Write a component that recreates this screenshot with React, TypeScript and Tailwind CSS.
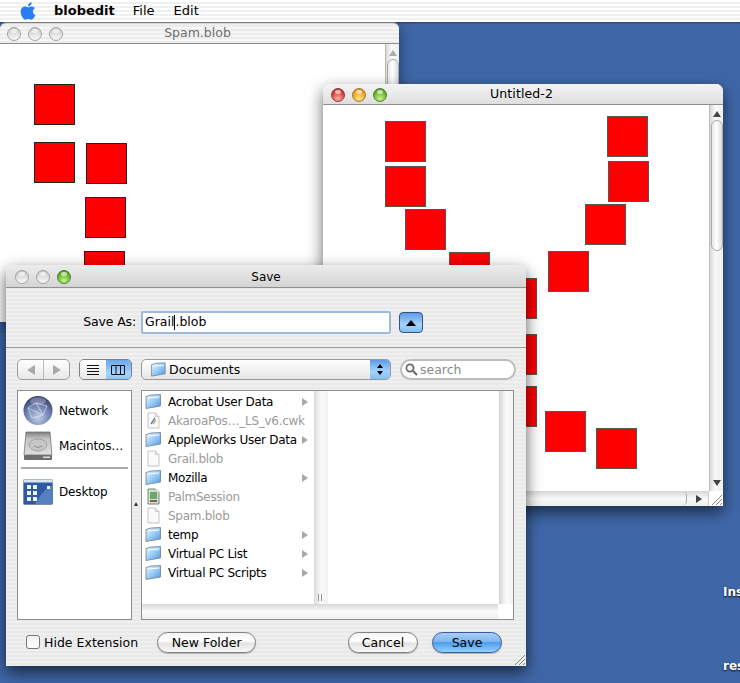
import React from "react";
import { FaApple } from "react-icons/fa";

const FONT = "font-['DejaVu_Sans',sans-serif]";
const STRIPES = "bg-[repeating-linear-gradient(180deg,#efefef_0px,#efefef_2px,#e9e9e9_2px,#e9e9e9_4px)]";

function Light({ color }: { color?: "red" | "yellow" | "green" }) {
  const fills = {
    red: "bg-[radial-gradient(circle_at_50%_80%,#ffb0aa_0%,#d9413c_60%,#9c2522_100%)] border-[#8e3a38]",
    yellow: "bg-[radial-gradient(circle_at_50%_80%,#ffe98f_0%,#f0a020_60%,#b87a18_100%)] border-[#a07a30]",
    green: "bg-[radial-gradient(circle_at_50%_80%,#c6f58e_0%,#69b32c_60%,#3f7a15_100%)] border-[#4f7f2f]",
  };
  const cls = color ? fills[color] : "bg-[linear-gradient(180deg,#c6c6c6_0%,#e6e6e6_60%,#f8f8f8_100%)] border-[#a2a2a2]";
  return (
    <span className={`relative block w-[14px] h-[14px] rounded-full border ${cls}`}>
      <span className="absolute left-[3px] top-[1px] w-[6px] h-[4px] rounded-full bg-white/60" />
    </span>
  );
}

function Lights({ colored, green, pos }: { colored?: boolean; green?: boolean; pos: string }) {
  return (
    <div className={`absolute ${pos} flex gap-[7px]`}>
      <Light color={colored ? "red" : undefined} />
      <Light color={colored ? "yellow" : undefined} />
      <Light color={colored || green ? "green" : undefined} />
    </div>
  );
}

function Sq({ x, y, grey }: { x: number; y: number; grey?: boolean }) {
  return (
    <div
      className={`absolute w-[41px] h-[41px] bg-[#ff0000] border ${grey ? "border-[#555]" : "border-[#222]"}`}
      style={{ left: x, top: y }}
    />
  );
}

function Folder() {
  return (
    <svg width="17" height="17" viewBox="0 0 17 17" className="shrink-0">
      <defs>
        <linearGradient id="fg" x1="0" y1="0" x2="1" y2="1">
          <stop offset="0" stopColor="#eef7ff" />
          <stop offset="0.5" stopColor="#9accf6" />
          <stop offset="1" stopColor="#4f96e0" />
        </linearGradient>
      </defs>
      <path d="M1 3.5 L6 2 L15.5 1.5 L15.5 13 L1 15.5 Z" fill="url(#fg)" stroke="#6d7f93" strokeWidth="0.8" />
      <path d="M3 5 L14 4" stroke="#ffffff" strokeWidth="1" />
    </svg>
  );
}

function Doc({ kind }: { kind?: "cwk" | "palm" }) {
  return (
    <svg width="17" height="17" viewBox="0 0 17 17" className="shrink-0">
      <path
        d="M3 1 H10.5 L14 4.5 V16 H3 Z"
        fill={kind === "palm" ? "#cfe2cf" : "#fafafa"}
        stroke={kind === "palm" ? "#6a8a6a" : "#c4c4c4"}
        strokeWidth="1"
      />
      <path d="M10.5 1 V4.5 H14" fill="#e4e4e4" stroke="#c4c4c4" strokeWidth="0.8" />
      {kind === "cwk" && (
        <>
          <path d="M6 12 L10 6" stroke="#4f7fd0" strokeWidth="1.4" />
          <path d="M8 12 L11 8" stroke="#e0b030" strokeWidth="1.4" />
        </>
      )}
      {kind === "palm" && (
        <>
          <rect x="5" y="4" width="7" height="7" fill="#6fa56f" />
          <rect x="5" y="12" width="7" height="2" fill="#8a5a5a" />
        </>
      )}
    </svg>
  );
}

function Row({ name, folder, kind }: { name: string; folder?: boolean; kind?: "cwk" | "palm" }) {
  return (
    <div className="h-[19px] flex items-center pl-[3px] pr-[3px] relative">
      {folder ? <Folder /> : <Doc kind={kind} />}
      <span className={`ml-[6px] whitespace-nowrap text-[12px] tracking-[-0.28px] ${folder ? "text-black" : "text-[#9a9a9a]"}`}>
        {name}
      </span>
      {folder && (
        <span className="absolute right-[6px] top-[6px] w-0 h-0 border-y-[4px] border-y-transparent border-l-[6px] border-l-[#a8a8a8]" />
      )}
    </div>
  );
}

function Globe() {
  return (
    <svg width="30" height="31" viewBox="0 0 30 31" className="shrink-0">
      <defs>
        <radialGradient id="gl" cx="0.5" cy="0.75" r="0.75">
          <stop offset="0" stopColor="#c0cbe4" />
          <stop offset="0.55" stopColor="#7283b4" />
          <stop offset="1" stopColor="#2c3560" />
        </radialGradient>
      </defs>
      <circle cx="15" cy="15.5" r="14.5" fill="url(#gl)" />
      <ellipse cx="15" cy="6" rx="8" ry="4" fill="#ffffff" opacity="0.25" />
      <path d="M5 13 L13 8 L24 11 L20 20 L9 23 Z M13 8 L20 20 M5 13 L20 20" fill="none" stroke="#e6ebf7" strokeWidth="0.6" />
    </svg>
  );
}

function Disk() {
  return (
    <svg width="30" height="30" viewBox="0 0 30 30" className="shrink-0">
      <defs>
        <linearGradient id="hd" x1="0" y1="0" x2="0" y2="1">
          <stop offset="0" stopColor="#7e7e7e" />
          <stop offset="0.3" stopColor="#c4c4c4" />
          <stop offset="1" stopColor="#e0e0e0" />
        </linearGradient>
      </defs>
      <path d="M3 1 H27 L29 24 H1 Z" fill="url(#hd)" stroke="#666" strokeWidth="0.7" />
      <ellipse cx="15" cy="14" rx="9" ry="6" fill="#c6c6c6" stroke="#8a8a8a" strokeWidth="0.6" />
      <path d="M11 15 Q15 18 19 15" fill="none" stroke="#808080" strokeWidth="0.8" />
      <rect x="1" y="24" width="28" height="5" rx="1" fill="#6e6e6e" />
      <rect x="20" y="25.5" width="7" height="1.5" fill="#ddd" />
    </svg>
  );
}

function DesktopIcon() {
  return (
    <svg width="30" height="26" viewBox="0 0 30 26" className="shrink-0">
      <rect x="0.5" y="0.5" width="29" height="25" rx="1" fill="#2a5aa8" stroke="#7d8da5" />
      <rect x="0.5" y="0.5" width="29" height="3" fill="#dbe4ef" />
      <path d="M12 25 Q22 8 30 6 V25 Z" fill="#5580c0" />
      {[6, 12, 18].map((y) => (
        <React.Fragment key={y}>
          <rect x="4" y={y} width="4" height="4" fill="#f0f4fa" />
          <rect x="10" y={y} width="4" height="4" fill="#f0f4fa" />
        </React.Fragment>
      ))}
      <rect x="24" y="7" width="3" height="3" fill="#f0f4fa" />
    </svg>
  );
}

function Grip({ cls }: { cls: string }) {
  return (
    <svg width="14" height="14" viewBox="0 0 14 14" className={`absolute right-0 bottom-0 ${cls}`}>
      <path d="M13 3 L3 13 M13 7 L7 13 M13 11 L11 13" stroke="#8a8a8a" strokeWidth="1" />
    </svg>
  );
}

function VScroll({ thumbH, blue, bottomArrow }: { thumbH: number; blue?: boolean; bottomArrow?: boolean }) {
  return (
    <div className="w-[14px] h-full bg-[linear-gradient(90deg,#d8d8d8,#f8f8f8_40%,#f0f0f0)] border-l border-[#bbb] flex flex-col items-center">
      <span className={`mt-[6px] w-0 h-0 border-x-[4px] border-x-transparent border-b-[6px] ${blue ? "border-b-[#444]" : "border-b-[#aaa]"}`} />
      <div
        className="mt-[3px] w-[12px] rounded-full border border-[#aaa] bg-[linear-gradient(90deg,#e8e8e8,#ffffff_45%,#dcdcdc)]"
        style={{ height: thumbH }}
      />
      {bottomArrow && (
        <span className="mt-auto mb-[5px] w-0 h-0 border-x-[4px] border-x-transparent border-t-[6px] border-t-[#444]" />
      )}
    </div>
  );
}

function Pill({ children, w, primary }: { children: React.ReactNode; w: string; primary?: boolean }) {
  return (
    <div
      className={`${w} h-[21px] pt-[1px] rounded-full border flex items-center justify-center text-[12.5px] text-black shadow-[0_1px_1px_rgba(0,0,0,0.25)] ${
        primary
          ? "border-[#3c5aa0] bg-[linear-gradient(180deg,#a8cef5_0%,#7db6f0_45%,#4f9cec_50%,#8fd4fc_100%)]"
          : "border-[#808080] bg-[linear-gradient(180deg,#f4f4f4_0%,#ffffff_40%,#e4e4e4_55%,#f8f8f8_100%)]"
      }`}
    >
      {children}
    </div>
  );
}

const files: { name: string; folder?: boolean; kind?: "cwk" | "palm" }[] = [
  { name: "Acrobat User Data", folder: true },
  { name: "AkaroaPos…_LS_v6.cwk", kind: "cwk" },
  { name: "AppleWorks User Data", folder: true },
  { name: "Grail.blob" },
  { name: "Mozilla", folder: true },
  { name: "PalmSession", kind: "palm" },
  { name: "Spam.blob" },
  { name: "temp", folder: true },
  { name: "Virtual PC List", folder: true },
  { name: "Virtual PC Scripts", folder: true },
];

export default function App() {
  return (
    <div className={`relative w-[740px] h-[683px] overflow-hidden bg-[#3f67a8] ${FONT}`}>
      {/* desktop labels */}
      <span className="absolute left-[723px] top-[583px] text-[12px] font-bold text-white [text-shadow:0_1px_2px_#000]">Ins</span>
      <span className="absolute left-[723px] top-[657px] text-[12px] font-bold text-white [text-shadow:0_1px_2px_#000]">res</span>

      {/* Spam window */}
      <div className="absolute left-0 top-[22px] w-[399px] h-[300px] rounded-t-[7px] bg-white flex flex-col shadow-[0_4px_14px_rgba(0,0,0,0.45)]">
        <div className="relative h-[22px] shrink-0 pr-[4px] rounded-t-[7px] border-t border-[#aaa] border-b border-b-[#8e8e8e] bg-[repeating-linear-gradient(180deg,#f6f6f6_0px,#f6f6f6_2px,#ececec_2px,#ececec_4px)] flex items-center justify-center text-[12.5px] text-[#6e6e6e]">
          <Lights pos="left-[7px] top-[4px]" />
          Spam.blob
        </div>
        <div className="relative flex-1 flex justify-end">
          <Sq x={34} y={40} />
          <Sq x={34} y={98} />
          <Sq x={86} y={99} />
          <Sq x={85} y={153} />
          <Sq x={84} y={207} />
          <VScroll thumbH={60} />
        </div>
      </div>

      {/* Untitled-2 window */}
      <div className="absolute left-[323px] top-[84px] w-[400px] h-[422px] rounded-t-[7px] bg-white flex flex-col shadow-[0_6px_16px_rgba(0,0,0,0.6)]">
        <div className="relative h-[21px] shrink-0 pr-[3px] rounded-t-[7px] border-b border-[#8e8e8e] bg-[linear-gradient(180deg,#f4f4f4,#dedede)] flex items-center justify-center text-[12.5px] tracking-[0.1px] text-black">
          <Lights colored pos="left-[8px] top-[4px]" />
          Untitled-2
        </div>
        <div className="relative flex-1 flex justify-end min-h-0">
          <Sq x={62} y={16} grey />
          <Sq x={62} y={61} grey />
          <Sq x={82} y={104} grey />
          <Sq x={126} y={147} grey />
          <Sq x={173} y={173} grey />
          <Sq x={173} y={229} grey />
          <Sq x={173} y={281} grey />
          <Sq x={222} y={306} grey />
          <Sq x={273} y={323} grey />
          <Sq x={284} y={11} grey />
          <Sq x={285} y={56} grey />
          <Sq x={262} y={99} grey />
          <Sq x={225} y={146} grey />
          <VScroll thumbH={131} blue bottomArrow />
        </div>
        <div className="relative h-[15px] shrink-0 flex bg-[linear-gradient(180deg,#d8d8d8,#f8f8f8_50%,#eeeeee)]">
          <div className="flex-1 flex justify-end items-center pr-[3px]">
            <span className="w-[4px] h-[13px] rounded-r-full border-r border-[#aaa]" />
          </div>
          <div className="w-[18px] flex items-center justify-center">
            <span className="w-0 h-0 border-y-[4px] border-y-transparent border-l-[6px] border-l-[#444]" />
          </div>
          <div className="w-[15px] bg-white border-l border-[#ccc]" />
          <Grip cls="" />
        </div>
      </div>

      {/* Save dialog */}
      <div className={`absolute left-[6px] top-[265px] w-[520px] h-[401px] rounded-t-[7px] flex flex-col ${STRIPES} shadow-[0_6px_16px_rgba(0,0,0,0.65)]`}>
        <div className="relative h-[23px] shrink-0 pt-[2px] rounded-t-[7px] border-b border-[#8e8e8e] bg-[linear-gradient(180deg,#ececec,#d4d4d4)] flex items-center justify-center text-[12px] text-black">
          <Lights green pos="left-[9px] top-[5px]" />
          Save
        </div>

        {/* Save As */}
        <div className="h-[60px] shrink-0 border-b border-[#9a9a9a] flex items-center pt-[10px]">
          <span className="w-[130px] text-right text-[12.5px] tracking-[-0.15px] text-black">Save As:</span>
          <div className="ml-[5px] w-[250px] h-[23px] bg-white border-2 border-[#9cbbdc] rounded-[2px] flex items-center pl-[2px] text-[12.5px] text-black">
            Grail<span className="inline-block w-px h-[15px] bg-black" />.blob
          </div>
          <div className="ml-[8px] w-[24px] h-[21px] rounded-[4px] border border-[#3a4f80] bg-[linear-gradient(180deg,#5b9ce8,#a6d2f9_60%,#7fc0f8)] flex items-center justify-center">
            <span className="w-0 h-0 border-x-[5px] border-x-transparent border-b-[6px] border-b-black" />
          </div>
        </div>

        {/* toolbar */}
        <div className="h-[42px] shrink-0 flex items-start pt-[11px] pl-[11px]">
          <div className="w-[53px] h-[21px] rounded-[5px] border border-[#a0a0a0] bg-[linear-gradient(180deg,#fff,#e8e8e8)] flex">
            <div className="flex-1 border-r border-[#bbb] flex items-center justify-center">
              <span className="w-0 h-0 border-y-[5px] border-y-transparent border-r-[8px] border-r-[#aaa]" />
            </div>
            <div className="flex-1 flex items-center justify-center">
              <span className="w-0 h-0 border-y-[5px] border-y-transparent border-l-[8px] border-l-[#aaa]" />
            </div>
          </div>
          <div className="ml-[9px] w-[53px] h-[21px] rounded-[5px] border border-[#808080] flex overflow-hidden">
            <div className="flex-1 bg-[linear-gradient(180deg,#fff,#e8e8e8)] flex items-center justify-center">
              <svg width="12" height="10" viewBox="0 0 12 10"><path d="M0 .5H12M0 3.5H12M0 6.5H12M0 9.5H12" stroke="#111" /></svg>
            </div>
            <div className="flex-1 bg-[linear-gradient(180deg,#6aa8ea,#a8d4fa_70%,#8ac8fa)] flex items-center justify-center">
              <svg width="14" height="10" viewBox="0 0 14 10"><path d="M.5.5H13.5V9.5H.5ZM5 .5V9.5M9.5.5V9.5" fill="none" stroke="#111" /></svg>
            </div>
          </div>
          <div className="ml-[9px] w-[250px] h-[21px] rounded-[5px] border border-[#9a9a9a] bg-[linear-gradient(180deg,#fff,#e6e6e6)] flex items-center overflow-hidden">
            <span className="ml-[8px] scale-[0.95]"><Folder /></span>
            <span className="ml-[2px] pt-[1px] flex-1 text-[12.5px] text-black">Documents</span>
            <div className="w-[20px] h-full bg-[linear-gradient(180deg,#5b9ce8,#a6d2f9_60%,#7fc0f8)] flex flex-col items-center justify-center gap-[3px]">
              <span className="w-0 h-0 border-x-[3px] border-x-transparent border-b-[4px] border-b-black" />
              <span className="w-0 h-0 border-x-[3px] border-x-transparent border-t-[4px] border-t-black" />
            </div>
          </div>
          <div className="ml-[9px] w-[116px] h-[21px] rounded-full border-2 border-[#bdbdbd] bg-white flex items-center pl-[3px] text-[12.5px] text-[#8a8a8a]">
            <svg width="13" height="13" viewBox="0 0 13 13"><circle cx="5" cy="5" r="3.6" fill="none" stroke="#666" strokeWidth="1.7" /><path d="M8 8L12 12" stroke="#666" strokeWidth="2" /></svg>
            <span className="ml-[2px] pt-[1px]">search</span>
          </div>
        </div>

        {/* browser */}
        <div className="h-[230px] shrink-0 flex pl-[11px]">
          <div className="w-[115px] h-full bg-white border border-[#8e8e8e] flex flex-col pt-[2px]">
            <div className="h-[35px] flex items-center gap-[6px] pl-[5px]">
              <Globe />
              <span className="text-[12px] tracking-[-0.15px] text-black whitespace-nowrap">Network</span>
            </div>
            <div className="h-[35px] flex items-center gap-[6px] pl-[5px]">
              <Disk />
              <span className="text-[12px] tracking-[-0.15px] text-black whitespace-nowrap">Macintos…</span>
            </div>
            <div className="mx-[3px] mt-[4px] h-[2px] bg-[#aaa]" />
            <div className="mt-[6px] h-[34px] flex items-center gap-[6px] pl-[5px]">
              <DesktopIcon />
              <span className="text-[12px] tracking-[-0.15px] text-black whitespace-nowrap">Desktop</span>
            </div>
          </div>
          <div className="relative w-[9px] h-full">
            <span className="absolute left-[2px] top-[112px] w-0 h-0 border-x-[2.5px] border-x-transparent border-b-[4px] border-b-[#333]" />
          </div>
          <div className="w-[373px] h-full bg-white border border-[#8e8e8e] flex flex-col">
            <div className="flex-1 min-h-0 flex">
              <div className="w-[172px] h-full pt-[1px]">
                {files.map((f) => (
                  <Row key={f.name} {...f} />
                ))}
              </div>
              <div className="relative w-[14px] h-full bg-[linear-gradient(90deg,#dcdcdc,#fafafa_50%,#f2f2f2)]">
                <span className="absolute left-[4px] bottom-[3px] w-[4px] h-[7px] border-x border-[#999]" />
              </div>
              <div className="flex-1 bg-white" />
              <div className="w-[14px] h-full bg-[linear-gradient(90deg,#d4d4d4,#fafafa_50%,#f2f2f2)]" />
            </div>
            <div className="h-[15px] shrink-0 flex bg-[linear-gradient(180deg,#d8d8d8,#fafafa_50%,#eeeeee)]">
              <div className="flex-1" />
              <div className="w-[15px] bg-white" />
            </div>
          </div>
        </div>

        {/* buttons */}
        <div className="relative flex-1 flex items-start pt-[12px] pl-[20px]">
          <span className="w-[14px] h-[14px] mt-[3px] rounded-[3px] border border-[#777] bg-[linear-gradient(180deg,#f2f2f2,#ffffff)]" />
          <span className="ml-[4px] mt-[2px] text-[12.5px] tracking-[0.02px] text-black">Hide Extension</span>
          <div className="ml-[19px]">
            <Pill w="w-[99px]">New Folder</Pill>
          </div>
          <div className="ml-auto flex gap-[14px] pr-[24px]">
            <Pill w="w-[70px]">Cancel</Pill>
            <Pill w="w-[70px]" primary>Save</Pill>
          </div>
          <Grip cls="" />
        </div>
      </div>

      {/* menu bar */}
      <div className="absolute left-0 top-0 w-full h-[22px] flex items-center bg-[repeating-linear-gradient(180deg,#ffffff_0px,#ffffff_2px,#f0f0f0_2px,#f0f0f0_4px)] text-[13px] text-black shadow-[0_1px_2px_rgba(0,0,0,0.4)]">
        <FaApple className="ml-[18px] text-[#2a7df0]" size={20} />
        <span className="ml-[16px] font-bold">blobedit</span>
        <span className="ml-[18px]">File</span>
        <span className="ml-[19px]">Edit</span>
      </div>
    </div>
  );
}
